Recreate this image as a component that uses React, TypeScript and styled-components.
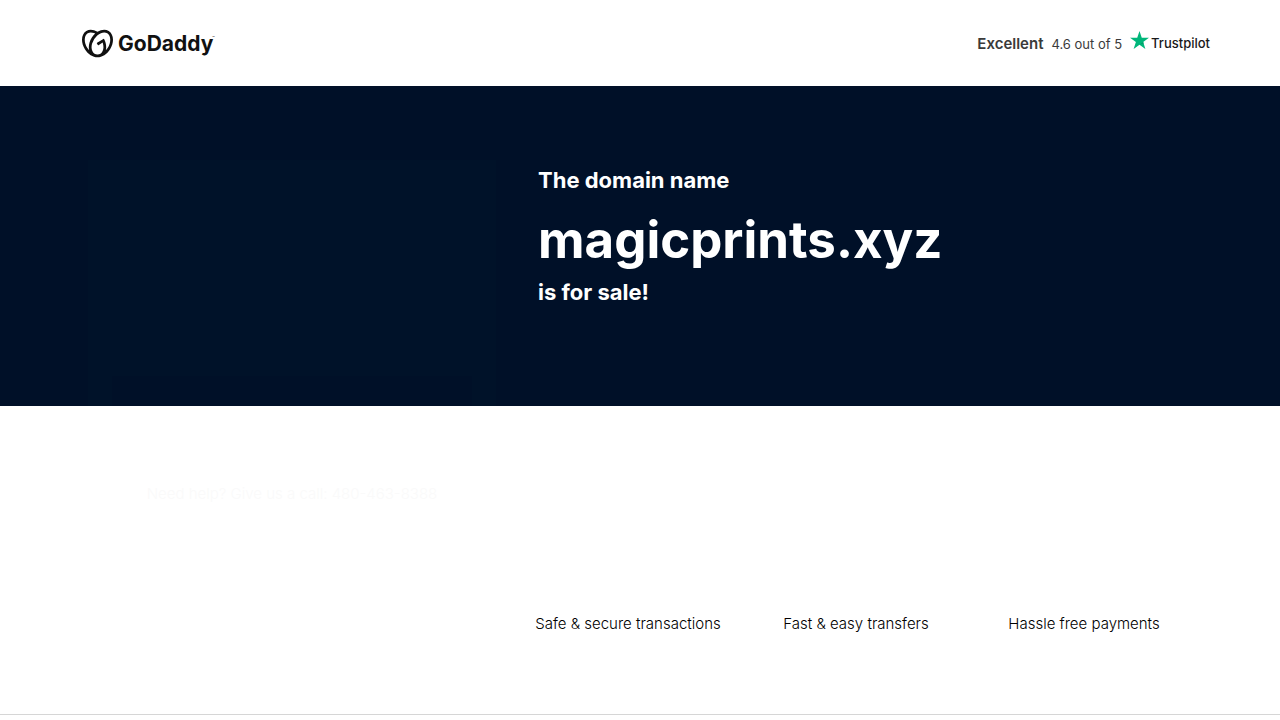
import React from "react";
import styled, { createGlobalStyle } from "styled-components";
import { SiGodaddy } from "react-icons/si";

const GlobalStyle = createGlobalStyle`
  *, *::before, *::after { box-sizing: border-box; }
  body {
    margin: 0;
    background: #fff;
    color: #111;
    font-family: Inter, "Liberation Sans", sans-serif;
    font-size: 15px;
    line-height: 24px;
  }
`;

const Header = styled.header`
  display: flex;
  align-items: center;
  justify-content: space-between;
  height: 86px;
  padding: 0 70px 0 82px;
`;

const Brand = styled.a`
  display: flex;
  align-items: center;
  gap: 5px;
  color: #111;
  text-decoration: none;
`;

const BrandName = styled.span`
  padding-top: 2px;
  font-size: 21px;
  font-weight: 700;
  line-height: 28px;
`;

const Mark = styled.sup`
  align-self: flex-start;
  margin-left: -6px;
  font-size: 4px;
  line-height: 20px;
`;

const Rating = styled.a`
  display: flex;
  align-items: center;
  gap: 8px;
  padding-top: 2px;
  color: #3a3a3a;
  font-size: 13px;
  text-decoration: none;
`;

const Verdict = styled.strong`
  font-size: 15px;
  font-weight: 600;
`;

const Trustpilot = styled.span`
  display: flex;
  align-items: center;
  gap: 2px;
  padding-bottom: 2px;
  color: #191919;
  font-weight: 500;

  svg { margin-bottom: 6px; }
`;

const columns = `
  display: grid;
  grid-template-columns: 432px minmax(0, 1fr);
  padding: 0 82px;
`;

const Hero = styled.section`
  ${columns}
  position: relative;
  min-height: 320px;
  background: #001028;
  color: #fff;
`;

const OfferCard = styled.aside`
  position: absolute;
  top: 74px;
  left: 88px;
  display: flex;
  flex-direction: column;
  gap: 76px;
  width: 408px;
  height: 376px;
  padding: 216px 24px 0;
  background: linear-gradient(#001229 246px, transparent 246px);
`;

const OfferPanel = styled.div`
  height: 30px;
  background: #001028;
`;

const CallText = styled.p`
  margin: 0;
  color: #fafafa;
  font-weight: 300;
  text-align: center;
`;

const Headline = styled.div`
  grid-column: 2;
  padding: 78px 24px 0;
`;

const Lead = styled.p`
  margin: 0;
  font-size: 22px;
  font-weight: 700;
  line-height: 32px;
`;

const Domain = styled.h1`
  margin: 10px 0 2px;
  font-size: 51px;
  font-weight: 700;
  line-height: 68px;
`;

const Benefits = styled.section`
  ${columns}
  padding-top: 206px;
  padding-bottom: 78px;
`;

const BenefitList = styled.ul`
  grid-column: 2;
  display: grid;
  grid-template-columns: repeat(3, 1fr);
  margin: 0;
  padding: 0;
  color: #000;
  list-style: none;
  font-weight: 300;
  text-align: center;
`;

const Footer = styled.footer`
  height: 6px;
  border-top: 1px solid #d6d6d6;
`;

const benefits = [
  "Safe & secure transactions",
  "Fast & easy transfers",
  "Hassle free payments",
];

export default function App() {
  return (
    <>
      <GlobalStyle />
      <Header>
        <Brand href="#" aria-label="GoDaddy">
          <SiGodaddy size={31} />
          <BrandName>GoDaddy</BrandName>
          <Mark>™</Mark>
        </Brand>
        <Rating href="#">
          <Verdict>Excellent</Verdict>
          <span>4.6 out of 5</span>
          <Trustpilot>
            <svg width="19" height="18" viewBox="0 0 20 19" aria-hidden="true">
              <path fill="#00b67a" d="M10 0l2.4 7.2H20l-6.1 4.5 2.3 7.2L10 14.5l-6.2 4.4 2.4-7.2L0 7.2h7.6z" />
              <path fill="#009a66" d="M14.4 13.3l-.5-1.6L10 14.5z" />
            </svg>
            Trustpilot
          </Trustpilot>
        </Rating>
      </Header>
      <main>
        <Hero>
          <Headline>
            <Lead>The domain name</Lead>
            <Domain>magicprints.xyz</Domain>
            <Lead>is for sale!</Lead>
          </Headline>
          <OfferCard>
            <OfferPanel />
            <CallText>Need help? Give us a call: 480-463-8388</CallText>
          </OfferCard>
        </Hero>
        <Benefits>
          <BenefitList>
            {benefits.map((text) => (
              <li key={text}>{text}</li>
            ))}
          </BenefitList>
        </Benefits>
      </main>
      <Footer />
    </>
  );
}
